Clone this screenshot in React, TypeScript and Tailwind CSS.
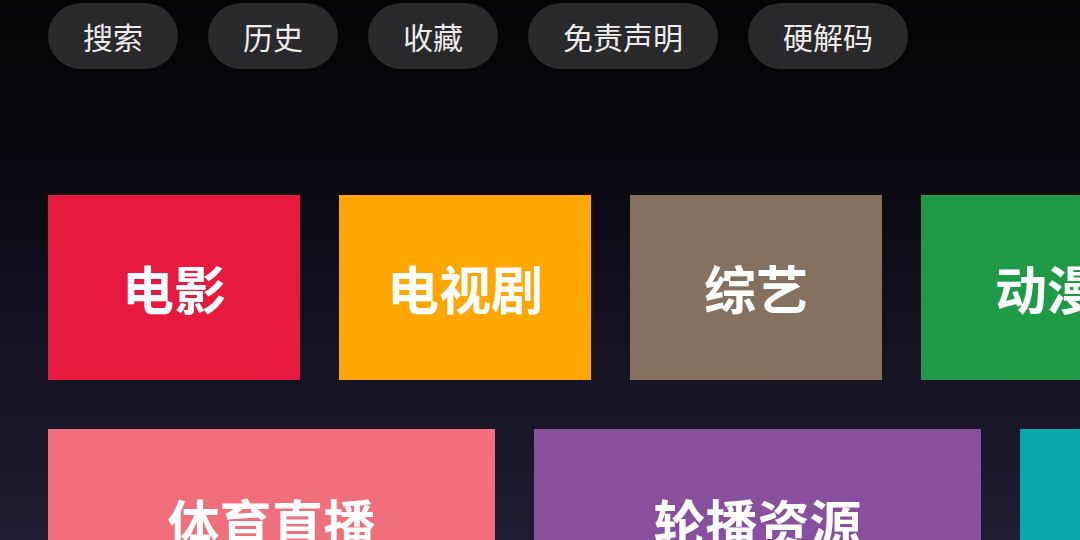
import React from 'react'

const menus = ['搜索', '历史', '收藏', '免责声明', '硬解码']

const topTiles = [
  { label: '电影', bg: 'bg-[#e8193f]' },
  { label: '电视剧', bg: 'bg-[#ffa600]' },
  { label: '综艺', bg: 'bg-[#86705f]' },
  { label: '动漫', bg: 'bg-[#1f9a47]' },
]

const bottomTiles = [
  { label: '体育直播', bg: 'bg-[#f06f7a]' },
  { label: '轮播资源', bg: 'bg-[#884f9f]' },
  { label: '', bg: 'bg-[#0aa6ae]' },
]

const font = { fontFamily: '"Noto Sans CJK SC", "Noto Sans", sans-serif' }

export default function App() {
  return (
    <div
      style={font}
      className="w-[1080px] h-[540px] overflow-hidden bg-gradient-to-b from-[#040405] via-[#100e1a] to-[#201c33]"
    >
      {/* top menu */}
      <div className="flex gap-[30px] pl-[48px] pt-[3px]">
        {menus.map((m) => (
          <div
            key={m}
            className="h-[66px] px-[35px] rounded-full bg-[#29292b] text-[#ececec] text-[30px] flex items-center shrink-0"
          >
            {m}
          </div>
        ))}
      </div>

      {/* category tiles */}
      <div className="flex gap-[39px] pl-[48px] mt-[126px]">
        {topTiles.map((t) => (
          <div
            key={t.label}
            className={`${t.bg} w-[252px] h-[185px] shrink-0 flex items-center justify-center text-white text-[52px] font-bold`}
          >
            {t.label}
          </div>
        ))}
      </div>

      <div className="flex gap-[39px] pl-[48px] mt-[49px]">
        {bottomTiles.map((t, i) => (
          <div
            key={i}
            className={`${t.bg} w-[447px] h-[185px] shrink-0 flex items-center justify-center text-white text-[52px] font-bold`}
          >
            {t.label}
          </div>
        ))}
      </div>
    </div>
  )
}
